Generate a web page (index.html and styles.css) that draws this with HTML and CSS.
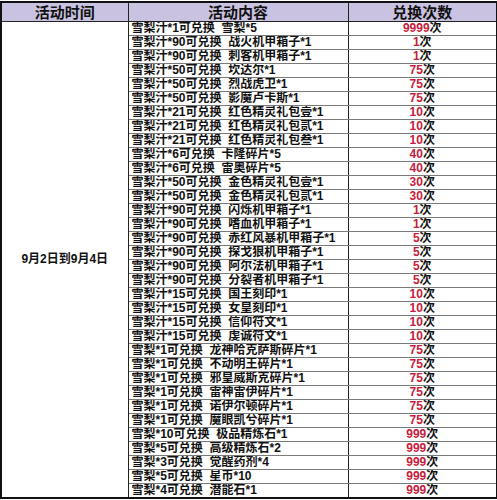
FILE: index.html
```html
<!DOCTYPE html>
<html lang="zh">
<head>
<meta charset="utf-8">
<link rel="stylesheet" href="styles.css">
</head>
<body>
<table class="sheet">
<colgroup><col class="c-time"><col class="c-content"><col class="c-count"></colgroup>
<thead>
<tr class="head"><th>活动时间</th><th>活动内容</th><th>兑换次数</th></tr>
</thead>
<tbody>
<tr><td class="date" rowspan="34">9月2日到9月4日</td><td class="item">雪梨汁*1可兑换&nbsp; 雪梨*5</td><td class="cnt"><span class="n">9999</span>次</td></tr>
<tr><td class="item">雪梨汁*90可兑换&nbsp; 战火机甲箱子*1</td><td class="cnt"><span class="n">1</span>次</td></tr>
<tr><td class="item">雪梨汁*90可兑换&nbsp; 刺客机甲箱子*1</td><td class="cnt"><span class="n">1</span>次</td></tr>
<tr><td class="item">雪梨汁*50可兑换&nbsp; 坎达尔*1</td><td class="cnt"><span class="n">75</span>次</td></tr>
<tr><td class="item">雪梨汁*50可兑换&nbsp; 烈战虎卫*1</td><td class="cnt"><span class="n">75</span>次</td></tr>
<tr><td class="item">雪梨汁*50可兑换&nbsp; 影魔卢卡斯*1</td><td class="cnt"><span class="n">75</span>次</td></tr>
<tr><td class="item">雪梨汁*21可兑换&nbsp; 红色精灵礼包壹*1</td><td class="cnt"><span class="n">10</span>次</td></tr>
<tr><td class="item">雪梨汁*21可兑换&nbsp; 红色精灵礼包贰*1</td><td class="cnt"><span class="n">10</span>次</td></tr>
<tr><td class="item">雪梨汁*21可兑换&nbsp; 红色精灵礼包叁*1</td><td class="cnt"><span class="n">10</span>次</td></tr>
<tr><td class="item">雪梨汁*6可兑换&nbsp; 卡隆碎片*5</td><td class="cnt"><span class="n">40</span>次</td></tr>
<tr><td class="item">雪梨汁*6可兑换&nbsp; 雷奥碎片*5</td><td class="cnt"><span class="n">40</span>次</td></tr>
<tr><td class="item">雪梨汁*50可兑换&nbsp; 金色精灵礼包壹*1</td><td class="cnt"><span class="n">30</span>次</td></tr>
<tr><td class="item">雪梨汁*50可兑换&nbsp; 金色精灵礼包贰*1</td><td class="cnt"><span class="n">30</span>次</td></tr>
<tr><td class="item">雪梨汁*90可兑换&nbsp; 闪烁机甲箱子*1</td><td class="cnt"><span class="n">1</span>次</td></tr>
<tr><td class="item">雪梨汁*90可兑换&nbsp; 嗜血机甲箱子*1</td><td class="cnt"><span class="n">1</span>次</td></tr>
<tr><td class="item">雪梨汁*90可兑换&nbsp; 赤红风暴机甲箱子*1</td><td class="cnt"><span class="n">5</span>次</td></tr>
<tr><td class="item">雪梨汁*90可兑换&nbsp; 探戈狼机甲箱子*1</td><td class="cnt"><span class="n">5</span>次</td></tr>
<tr><td class="item">雪梨汁*90可兑换&nbsp; 阿尔法机甲箱子*1</td><td class="cnt"><span class="n">5</span>次</td></tr>
<tr><td class="item">雪梨汁*90可兑换&nbsp; 分裂者机甲箱子*1</td><td class="cnt"><span class="n">5</span>次</td></tr>
<tr><td class="item">雪梨汁*15可兑换&nbsp; 国王刻印*1</td><td class="cnt"><span class="n">10</span>次</td></tr>
<tr><td class="item">雪梨汁*15可兑换&nbsp; 女皇刻印*1</td><td class="cnt"><span class="n">10</span>次</td></tr>
<tr><td class="item">雪梨汁*15可兑换&nbsp; 信仰符文*1</td><td class="cnt"><span class="n">10</span>次</td></tr>
<tr><td class="item">雪梨汁*15可兑换&nbsp; 虔诚符文*1</td><td class="cnt"><span class="n">10</span>次</td></tr>
<tr><td class="item">雪梨*1可兑换&nbsp; 龙神哈克萨斯碎片*1</td><td class="cnt"><span class="n">75</span>次</td></tr>
<tr><td class="item">雪梨*1可兑换&nbsp; 不动明王碎片*1</td><td class="cnt"><span class="n">75</span>次</td></tr>
<tr><td class="item">雪梨*1可兑换&nbsp; 邪皇威斯克碎片*1</td><td class="cnt"><span class="n">75</span>次</td></tr>
<tr><td class="item">雪梨*1可兑换&nbsp; 雷神雷伊碎片*1</td><td class="cnt"><span class="n">75</span>次</td></tr>
<tr><td class="item">雪梨*1可兑换&nbsp; 诺伊尔顿碎片*1</td><td class="cnt"><span class="n">75</span>次</td></tr>
<tr><td class="item">雪梨*1可兑换&nbsp; 魔眼凯兮碎片*1</td><td class="cnt"><span class="n">75</span>次</td></tr>
<tr><td class="item">雪梨*10可兑换&nbsp; 极品精炼石*1</td><td class="cnt"><span class="n">999</span>次</td></tr>
<tr><td class="item">雪梨*5可兑换&nbsp; 高级精炼石*2</td><td class="cnt"><span class="n">999</span>次</td></tr>
<tr><td class="item">雪梨*3可兑换&nbsp; 觉醒药剂*4</td><td class="cnt"><span class="n">999</span>次</td></tr>
<tr><td class="item">雪梨*5可兑换&nbsp; 星币*10</td><td class="cnt"><span class="n">999</span>次</td></tr>
<tr><td class="item">雪梨*4可兑换&nbsp; 潜能石*1</td><td class="cnt"><span class="n">999</span>次</td></tr>
</tbody>
</table>
</body>
</html>
```
FILE: styles.css
```css
html, body {
  margin: 0;
  padding: 0;
  background: #ffffff;
}
.sheet {
  margin: 1px 0 0 0;
  width: 496px;
  border-collapse: collapse;
  table-layout: fixed;
  border: 2px solid #111;
  font-family: "Liberation Sans", "Noto Sans CJK SC", sans-serif;
  color: #111;
}
.c-time { width: 127px; }
.c-content { width: 220px; }
.c-count { width: 149px; }
.head th {
  height: 18px;
  padding: 0;
  background: #c9c2e0;
  font-family: "Noto Sans CJK SC", sans-serif;
  font-size: 15px;
  font-weight: 700;
  line-height: 18px;
  text-align: center;
  border: 1px solid #222;
  border-bottom: 1px solid #222;
}
tbody td {
  height: 13px;
  padding: 0;
  font-size: 12px;
  font-weight: 700;
  line-height: 13px;
  white-space: nowrap;
  overflow: hidden;
  border-top: 1px solid #7a7a7a;
  border-bottom: 1px solid #7a7a7a;
  border-left: 1px solid #222;
  border-right: 1px solid #222;
}
tbody td.date {
  text-align: center;
  vertical-align: middle;
  font-size: 12px;
  border-bottom: 2px solid #111;
}
tbody td.item {
  padding-left: 3px;
  text-align: left;
}
tbody td.cnt {
  text-align: center;
}
.cnt .n {
  color: #c8203c;
}
```
